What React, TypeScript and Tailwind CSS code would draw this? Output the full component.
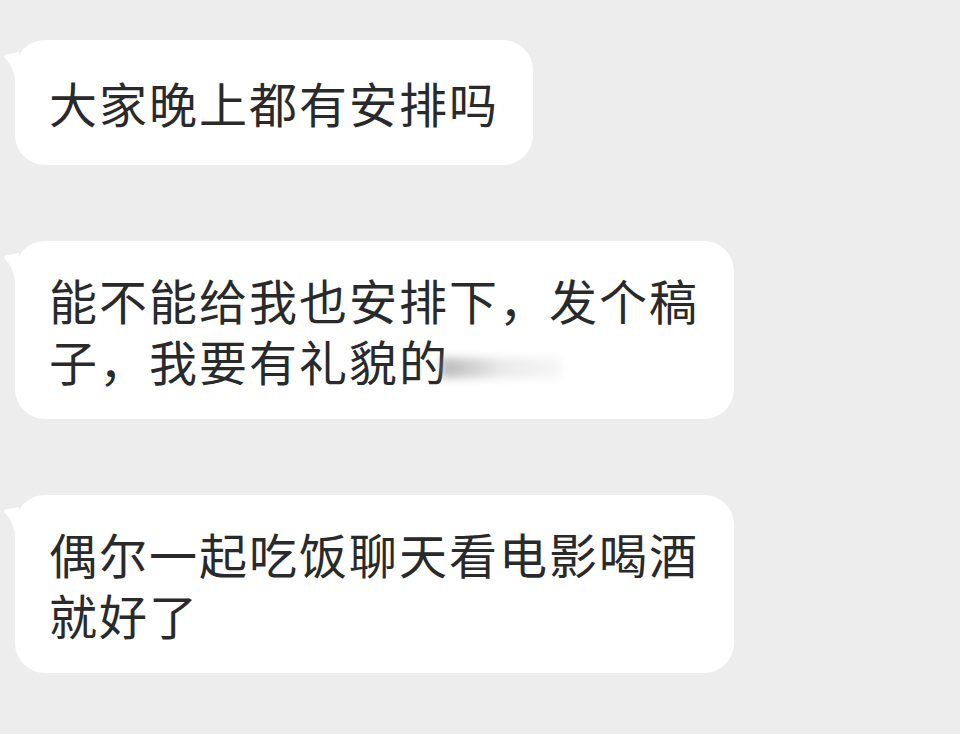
const Tail = () => (
  <svg
    className="absolute -left-[12px] top-[12px]"
    width="16"
    height="28"
    viewBox="0 0 16 28"
    aria-hidden
  >
    <path d="M16 0 L3 2.5 Q0 3.5 2 6 Q9 13 12 26 L16 28 Z" fill="#ffffff" />
  </svg>
);

const Bubble = ({ children, w, py }: { children: React.ReactNode; w: string; py: string }) => (
  <div className={`relative bg-white rounded-[30px] px-[34px] ${py} ${w}`}>
    <Tail />
    <p className="text-[48px] leading-[61px] tracking-[2px] text-[#2a2a2a]">{children}</p>
  </div>
);

export default function App() {
  return (
    <div
      className="w-[960px] h-[734px] bg-[#ededed] overflow-hidden flex flex-col items-start gap-[76px] pt-[40px] pl-[15px]"
      style={{ fontFamily: '"Noto Sans CJK SC", "Noto Sans", sans-serif' }}
    >
      <Bubble w="w-[518px]" py="py-[32px]">大家晚上都有安排吗</Bubble>
      <Bubble w="w-[719px]" py="py-[28px]">
        能不能给我也安排下，发个稿子，我要有礼貌的
        <span className="inline-block align-middle ml-[-8px] w-[120px] h-[20px] bg-gradient-to-r from-[#8a8a8a] via-[#dcdcdc] to-[#f0f0f0] blur-[4px] opacity-60" />
      </Bubble>
      <Bubble w="w-[719px]" py="py-[28px]">偶尔一起吃饭聊天看电影喝酒就好了</Bubble>
    </div>
  );
}
